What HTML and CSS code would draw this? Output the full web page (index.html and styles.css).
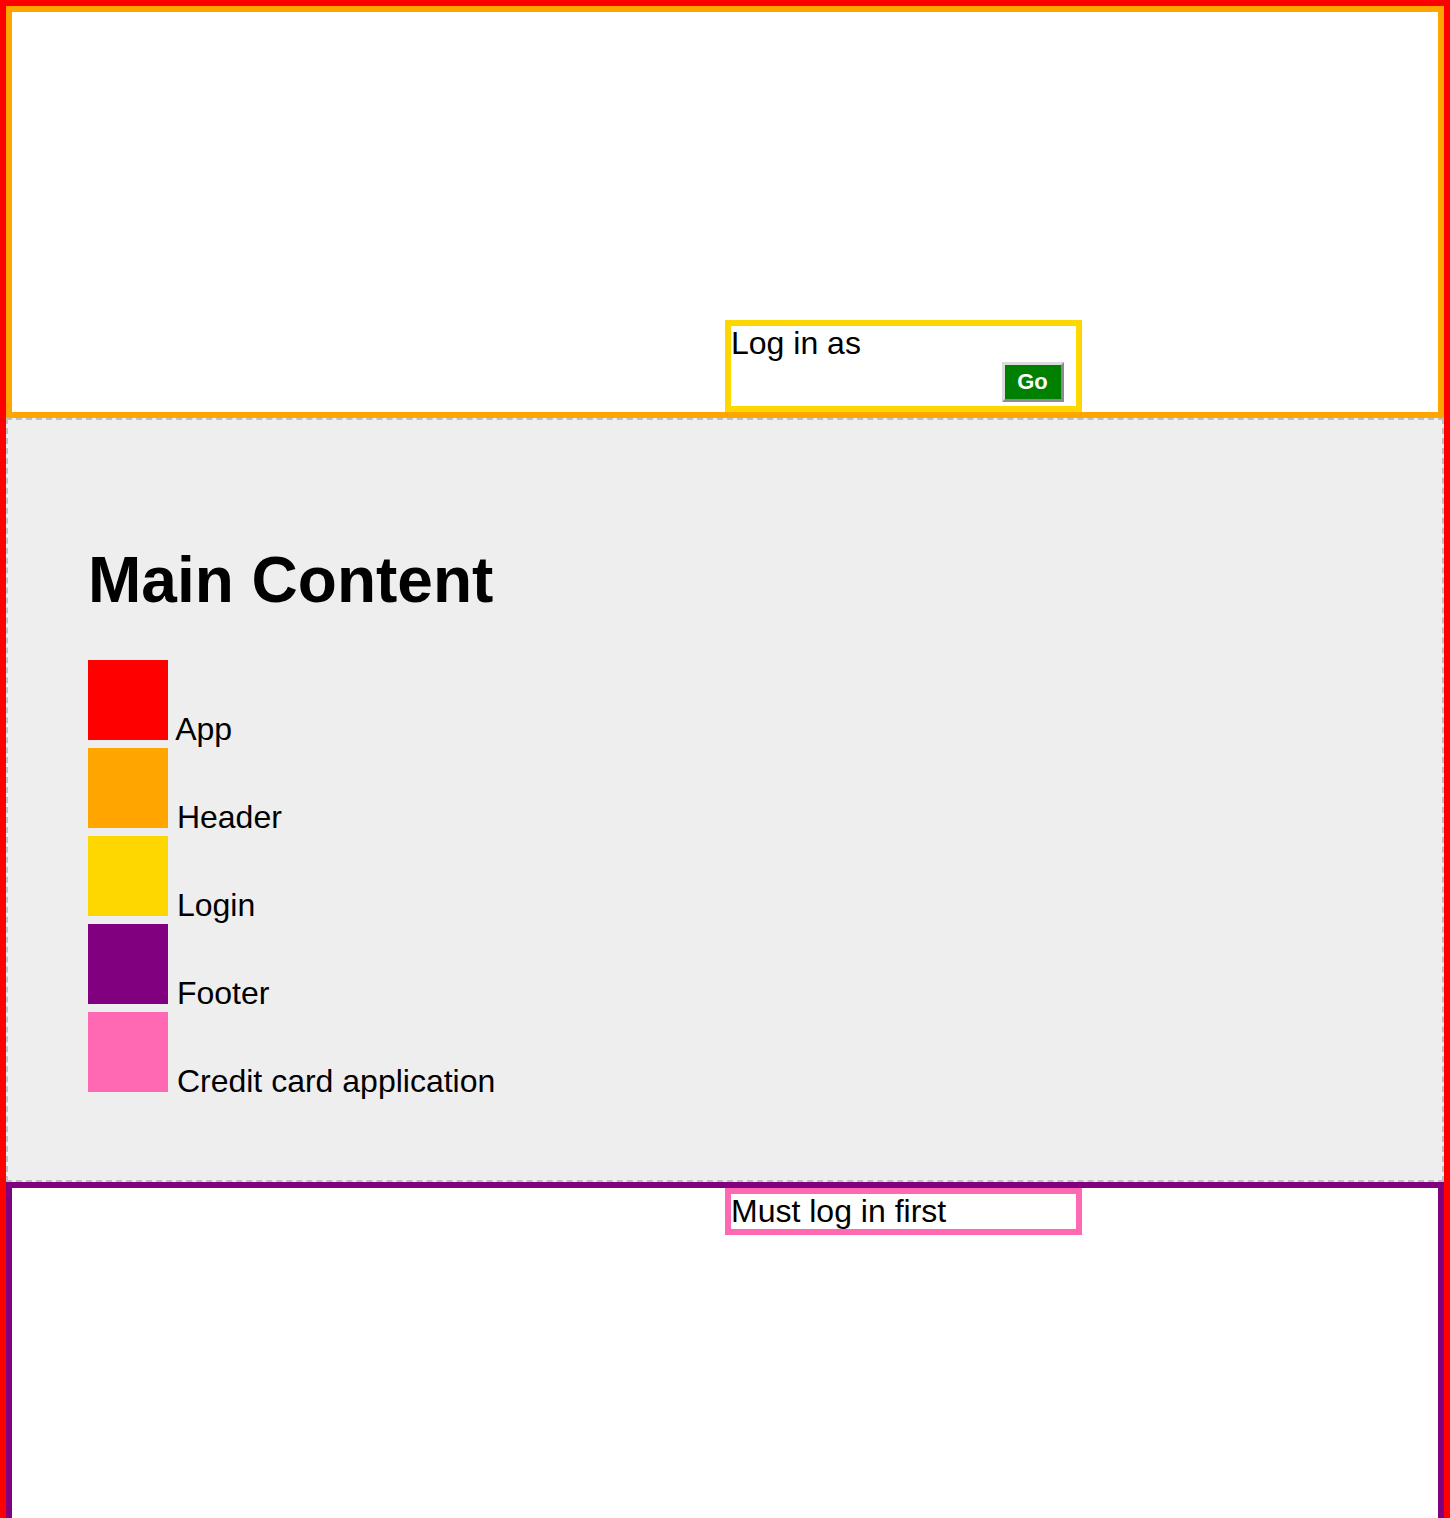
FILE: index.html
```html
<!DOCTYPE html>
<html lang="en">
<head>
    <meta charset="UTF-8">
    <meta name="viewport" content="width=device-width, initial-scale=1.0">
    <title>Micro Frontends - Layout</title>
    <link rel="stylesheet" href="styles.css">
</head>
<body>
    <div class="app">
        <header class="header">
            <div class="login">
                <div class="login-label">Log in as</div>
                <div class="login-actions">
                    <button type="button" class="go-btn">Go</button>
                </div>
            </div>
        </header>

        <main class="main">
            <h1>Main Content</h1>
            <div class="legend-row"><span class="swatch swatch-app"></span> App</div>
            <div class="legend-row"><span class="swatch swatch-header"></span> Header</div>
            <div class="legend-row"><span class="swatch swatch-login"></span> Login</div>
            <div class="legend-row"><span class="swatch swatch-footer"></span> Footer</div>
            <div class="legend-row"><span class="swatch swatch-card"></span> Credit card application</div>
        </main>

        <footer class="footer">
            <div class="card-app">Must log in first</div>
        </footer>
    </div>
</body>
</html>
```

FILE: styles.css
```css
* {
    margin: 0;
    padding: 0;
    box-sizing: border-box;
}

body {
    font-family: 'Liberation Sans', Arial, Helvetica, sans-serif;
    color: #000;
    background: white;
}

.app {
    border: 6px solid #ff0000;
}

/* header */
.header {
    height: 412px;
    border: 6px solid #ffa500;
    background: white;
    display: flex;
    flex-direction: column;
    justify-content: flex-end;
}

.login {
    width: 25%;
    margin-left: 50%;
    border: 6px solid #ffd700;
    background: white;
    font-size: 32px;
    line-height: 35px;
}

.login-actions {
    display: flex;
    justify-content: flex-end;
    padding: 1px 12px 4px 0;
}

.go-btn {
    width: 62px;
    height: 40px;
    background: #008000;
    color: white;
    font-family: 'Liberation Sans', Arial, sans-serif;
    font-size: 22px;
    font-weight: 700;
    line-height: 1;
    border: 3px solid;
    border-color: #dcdcdc #8c8c8c #8c8c8c #dcdcdc;
    cursor: pointer;
}

/* main */
.main {
    background: #eeeeee;
    border: 2px dashed #c0c0c0;
    padding: 80px;
}

.main h1 {
    font-size: 64px;
    font-weight: 700;
    margin: 0.67em 0;
}

.legend-row {
    height: 88px;
    font-size: 32px;
}

.swatch {
    display: inline-block;
    width: 80px;
    height: 80px;
}

.swatch-app { background: #ff0000; }
.swatch-header { background: #ffa500; }
.swatch-login { background: #ffd700; }
.swatch-footer { background: #800080; }
.swatch-card { background: #ff69b4; }

/* footer */
.footer {
    height: 412px;
    border: 6px solid #800080;
    background: white;
}

.card-app {
    width: 25%;
    margin-left: 50%;
    border: 6px solid #ff69b4;
    background: white;
    font-size: 32px;
    line-height: 35px;
}
```
